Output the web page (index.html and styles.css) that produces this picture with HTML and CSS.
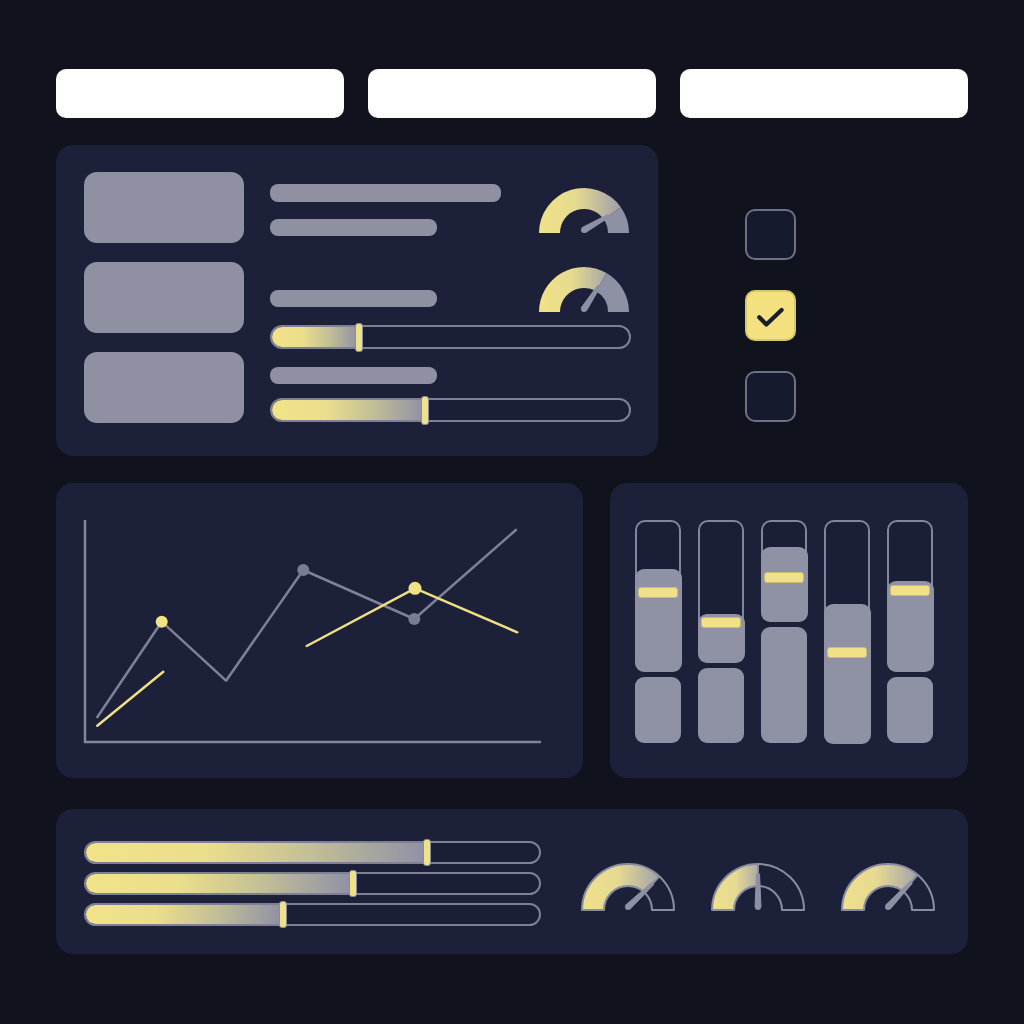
FILE: index.html
```html
<!DOCTYPE html>
<html>
<head>
<meta charset="utf-8">
<link rel="stylesheet" href="styles.css">
</head>
<body>
<div class="page">
  <div class="tabs">
    <div class="tab"></div>
    <div class="tab"></div>
    <div class="tab"></div>
  </div>

  <div class="row2">
    <div class="panel p1">
      <div class="lcol">
        <div class="box"></div>
        <div class="box"></div>
        <div class="box"></div>
      </div>
      <div class="rcol">
        <div class="rowa">
          <div class="bars">
            <div class="bar w231 h18"></div>
            <div class="bar w167 h17"></div>
          </div>
          <svg class="gauge-s" viewBox="0 0 92 47" width="92" height="47">
            <defs>
              <linearGradient id="ga" gradientUnits="userSpaceOnUse" x1="0" y1="0" x2="84" y2="0">
                <stop offset="0" stop-color="#f1e287"/>
                <stop offset="0.45" stop-color="#e6da8f"/>
                <stop offset="1" stop-color="#9c9dab"/>
              </linearGradient>
            </defs>
            <path d="M1 46 A45 45 0 0 1 82.86 20.19 L65.66 32.23 A24 24 0 0 0 22 46 Z" fill="url(#ga)"/>
            <path d="M82.86 20.19 A45 45 0 0 1 91 46 L70 46 A24 24 0 0 0 65.66 32.23 Z" fill="#8e90a4"/>
            <polygon points="47.72,45.46 71.43,30.02 69.71,27.56 44.28,40.54" fill="#8e90a4" stroke="#8e90a4" stroke-width="1" stroke-linejoin="round"/>
            <circle cx="46" cy="43" r="3" fill="#8e90a4"/>
          </svg>
        </div>
        <div class="rowb">
          <div class="bar w167 h17 mb6"></div>
          <svg class="gauge-s" viewBox="0 0 92 47" width="92" height="47">
            <defs>
              <linearGradient id="gb" gradientUnits="userSpaceOnUse" x1="0" y1="0" x2="70" y2="0">
                <stop offset="0" stop-color="#f1e287"/>
                <stop offset="0.5" stop-color="#e6da8f"/>
                <stop offset="1" stop-color="#a5a5ab"/>
              </linearGradient>
            </defs>
            <path d="M1 46 A45 45 0 0 1 68.5 7.03 L58 25.22 A24 24 0 0 0 22 46 Z" fill="url(#gb)"/>
            <path d="M68.5 7.03 A45 45 0 0 1 91 46 L70 46 A24 24 0 0 0 58 25.22 Z" fill="#8e90a4"/>
            <polygon points="48.6,44.5 62.3,20.77 59.7,19.27 43.4,41.5" fill="#8e90a4" stroke="#8e90a4" stroke-width="1" stroke-linejoin="round"/>
            <circle cx="46" cy="43" r="3" fill="#8e90a4"/>
          </svg>
        </div>
        <div class="slider mt12">
          <div class="fill" style="width:24.4%"></div>
          <div class="thumb"></div>
        </div>
        <div class="bar w167 h17 mt18"></div>
        <div class="slider mt14">
          <div class="fill" style="width:42.9%"></div>
          <div class="thumb"></div>
        </div>
      </div>
    </div>
    <div class="checks">
      <div class="check"></div>
      <div class="check on">
        <svg viewBox="0 0 51 51" width="47" height="47">
          <path d="M13.3 27.3 L21 35.2 L37.5 19.5" fill="none" stroke="#1c1d2a" stroke-width="4.6" stroke-linecap="round" stroke-linejoin="round"/>
        </svg>
      </div>
      <div class="check"></div>
    </div>
  </div>

  <div class="row3">
    <div class="panel chart">
      <svg viewBox="0 0 527 295" width="527" height="295">
        <polyline points="29,37 29,259 485,259" fill="none" stroke="#83859b" stroke-width="2.5"/>
        <polyline points="40.7,235 105.7,138.7 170,197.7 247.3,87 358.3,136 460.7,46.3" fill="none" stroke="#7f8197" stroke-width="2.5" stroke-linejoin="round"/>
        <line x1="41.3" y1="242.7" x2="107.3" y2="188.7" stroke="#efdf83" stroke-width="2.5" stroke-linecap="round"/>
        <polyline points="250.7,163 359,105.3 461.3,149.3" fill="none" stroke="#efdf83" stroke-width="2.5" stroke-linecap="round" stroke-linejoin="round"/>
        <circle cx="247.3" cy="87" r="6" fill="#7a7c92"/>
        <circle cx="358.3" cy="136" r="6" fill="#7a7c92"/>
        <circle cx="105.7" cy="138.7" r="6" fill="#f2e283"/>
        <circle cx="359" cy="105.3" r="6.5" fill="#f2e283"/>
      </svg>
    </div>
    <div class="panel faders">
      <div class="fader">
        <div class="slot" style="height:151px"><div class="ffill" style="height:103px"><div class="handle" style="margin-top:18px"></div></div></div>
        <div class="lower" style="height:66px"></div>
      </div>
      <div class="fader">
        <div class="slot" style="height:142px"><div class="ffill" style="height:49px"><div class="handle" style="margin-top:3px"></div></div></div>
        <div class="lower" style="height:75px"></div>
      </div>
      <div class="fader">
        <div class="slot" style="height:101px"><div class="ffill" style="height:75px"><div class="handle" style="margin-top:25px"></div></div></div>
        <div class="lower" style="height:116px"></div>
      </div>
      <div class="fader">
        <div class="slot" style="height:223px"><div class="ffill" style="height:140px"><div class="handle" style="margin-top:43px"></div></div></div>
      </div>
      <div class="fader">
        <div class="slot" style="height:152px"><div class="ffill" style="height:91px"><div class="handle" style="margin-top:4px"></div></div></div>
        <div class="lower" style="height:66px"></div>
      </div>
    </div>
  </div>

  <div class="panel p4">
    <div class="sliders">
      <div class="slider s2">
        <div class="fill" style="width:75.3%"></div>
        <div class="thumb"></div>
      </div>
      <div class="slider s2">
        <div class="fill" style="width:58.9%"></div>
        <div class="thumb"></div>
      </div>
      <div class="slider s2">
        <div class="fill" style="width:43.5%"></div>
        <div class="thumb"></div>
      </div>
    </div>
    <div class="gauges">
      <svg viewBox="0 0 96 49" width="96" height="49">
        <defs>
          <linearGradient id="gc" gradientUnits="userSpaceOnUse" x1="2" y1="0" x2="80" y2="0">
            <stop offset="0" stop-color="#efe08a"/>
            <stop offset="0.45" stop-color="#e6da92"/>
            <stop offset="1" stop-color="#a2a2ab"/>
          </linearGradient>
        </defs>
        <path d="M2 48 A46 46 0 0 1 79.37 14.37 L64.37 30.45 A24 24 0 0 0 24 48 Z" fill="url(#gc)"/>
        <path d="M2 48 A46 46 0 0 1 94 48 L72 48 A24 24 0 0 0 24 48 Z" fill="none" stroke="#8a8ca2" stroke-width="2" stroke-linejoin="round"/>
        <path d="M79.37 14.37 L64.37 30.45" stroke="#8a8ca2" stroke-width="2"/>
        <polygon points="50.19,47.05 73.65,22.70 71.45,20.66 45.81,42.95" fill="#8e90a4" stroke="#8e90a4" stroke-width="1" stroke-linejoin="round"/>
        <circle cx="48" cy="45" r="3" fill="#8e90a4"/>
      </svg>
      <svg viewBox="0 0 96 49" width="96" height="49">
        <defs>
          <linearGradient id="gd" gradientUnits="userSpaceOnUse" x1="2" y1="0" x2="50" y2="0">
            <stop offset="0" stop-color="#efe08a"/>
            <stop offset="0.5" stop-color="#e6da92"/>
            <stop offset="1" stop-color="#a6a6ad"/>
          </linearGradient>
        </defs>
        <path d="M2 48 A46 46 0 0 1 48 2 L48 24 A24 24 0 0 0 24 48 Z" fill="url(#gd)"/>
        <path d="M2 48 A46 46 0 0 1 94 48 L72 48 A24 24 0 0 0 24 48 Z" fill="none" stroke="#8a8ca2" stroke-width="2" stroke-linejoin="round"/>
        <path d="M48 2 L48 24" stroke="#8a8ca2" stroke-width="2"/>
        <polygon points="51,45 49.5,12 46.5,12 45,45" fill="#8e90a4" stroke="#8e90a4" stroke-width="1" stroke-linejoin="round"/>
        <circle cx="48" cy="45" r="3" fill="#8e90a4"/>
      </svg>
      <svg viewBox="0 0 96 49" width="96" height="49">
        <defs>
          <linearGradient id="ge" gradientUnits="userSpaceOnUse" x1="2" y1="0" x2="78" y2="0">
            <stop offset="0" stop-color="#efe08a"/>
            <stop offset="0.45" stop-color="#e6da92"/>
            <stop offset="1" stop-color="#a2a2ab"/>
          </linearGradient>
        </defs>
        <path d="M2 48 A46 46 0 0 1 77.57 12.76 L63.43 29.61 A24 24 0 0 0 24 48 Z" fill="url(#ge)"/>
        <path d="M2 48 A46 46 0 0 1 94 48 L72 48 A24 24 0 0 0 24 48 Z" fill="none" stroke="#8a8ca2" stroke-width="2" stroke-linejoin="round"/>
        <path d="M77.57 12.76 L63.43 29.61" stroke="#8a8ca2" stroke-width="2"/>
        <polygon points="50.30,46.93 72.30,21.38 70.00,19.46 45.70,43.07" fill="#8e90a4" stroke="#8e90a4" stroke-width="1" stroke-linejoin="round"/>
        <circle cx="48" cy="45" r="3" fill="#8e90a4"/>
      </svg>
    </div>
  </div>
</div>
</body>
</html>
```

FILE: styles.css
```css
* { box-sizing: border-box; }
html, body {
  margin: 0;
  padding: 0;
  background: #10121d;
  font-family: "Liberation Sans", Arial, sans-serif;
}
.page {
  width: 1024px;
  height: 1024px;
  padding: 69px 56px 0 56px;
}
.tabs {
  display: grid;
  grid-template-columns: 288px 288px 288px;
  gap: 24px;
}
.tab {
  height: 49px;
  background: #ffffff;
  border-radius: 10px;
}
.panel {
  background: #1c2039;
  border-radius: 17px;
}
.row2 {
  display: flex;
  margin-top: 27px;
}
.p1 {
  width: 602px;
  height: 311px;
  padding: 27px 27px 0 28px;
  display: flex;
  gap: 26px;
}
.lcol {
  width: 160px;
  display: flex;
  flex-direction: column;
  gap: 19px;
}
.box {
  height: 71px;
  background: #8f91a3;
  border-radius: 13px;
}
.rcol {
  width: 361px;
  padding-top: 12px;
  display: flex;
  flex-direction: column;
}
.rowa {
  height: 52px;
  display: flex;
  justify-content: space-between;
  align-items: center;
}
.rowb {
  margin-top: 31px;
  height: 46px;
  display: flex;
  justify-content: space-between;
  align-items: flex-end;
}
.gauge-s {
  display: block;
  margin-right: 1px;
  flex-shrink: 0;
}
.bars {
  display: flex;
  flex-direction: column;
  gap: 17px;
}
.bar {
  background: #8f91a3;
  border-radius: 8px;
}
.w231 { width: 231px; }
.w167 { width: 167px; }
.h18 { height: 18px; }
.h17 { height: 17px; }
.mb6 { margin-bottom: 6px; }
.mt12 { margin-top: 12px; }
.mt14 { margin-top: 14px; }
.mt18 { margin-top: 18px; }

.slider {
  height: 24px;
  border: 2px solid #7e8096;
  border-radius: 12px;
  background: #1a1e36;
  display: flex;
  align-items: center;
}
.fill {
  height: 100%;
  border-radius: 10px 0 0 10px;
  background: linear-gradient(90deg, #f2e389 0%, #ebde8c 35%, #c4c096 65%, #8e90a6 100%);
}
.thumb {
  width: 8px;
  height: 29px;
  margin-left: -4px;
  flex-shrink: 0;
  background: #efe08a;
  border: 1.5px solid #8a8ca2;
  border-radius: 3px;
}

.checks {
  padding-left: 87px;
  padding-top: 64px;
  display: flex;
  flex-direction: column;
  gap: 30px;
}
.check {
  width: 51px;
  height: 51px;
  border: 2px solid #6d7088;
  border-radius: 10px;
  background: #161a2d;
  display: flex;
  align-items: center;
  justify-content: center;
}
.check.on {
  background: #f3e17f;
  border-color: #d8c66e;
}
.check svg { display: block; }

.row3 {
  display: flex;
  gap: 27px;
  margin-top: 27px;
}
.chart {
  width: 527px;
  height: 295px;
}
.chart svg { display: block; }
.faders {
  width: 358px;
  height: 295px;
  padding: 37px 0 0 25px;
  display: grid;
  grid-template-columns: repeat(5, 46px);
  column-gap: 17px;
  align-content: start;
}
.fader {
  display: flex;
  flex-direction: column;
  gap: 6px;
  height: 223px;
}
.slot {
  border: 2.5px solid #83859c;
  border-radius: 10px;
  background: #1a1e36;
  display: flex;
  flex-direction: column;
  justify-content: flex-end;
}
.ffill {
  margin: 0 -2.5px -2.5px -2.5px;
  background: #8f91a4;
  border-radius: 9px;
  display: flex;
  flex-direction: column;
  align-items: center;
}
.handle {
  width: 40px;
  height: 11px;
  background: #f0e088;
  border: 1px solid #c9bd78;
  border-radius: 3px;
}
.lower {
  background: #8f91a4;
  border-radius: 9px;
}

.p4 {
  margin-top: 31px;
  height: 145px;
  padding: 32px 0 0 28px;
  display: flex;
}
.sliders {
  width: 457px;
  display: flex;
  flex-direction: column;
  gap: 8px;
}
.slider.s2 {
  height: 23px;
}
.slider.s2 .thumb {
  height: 27px;
}
.gauges {
  display: flex;
  gap: 34px;
  margin-left: 39px;
  margin-top: 21px;
  align-items: flex-start;
}
.gauges svg { display: block; }
```
